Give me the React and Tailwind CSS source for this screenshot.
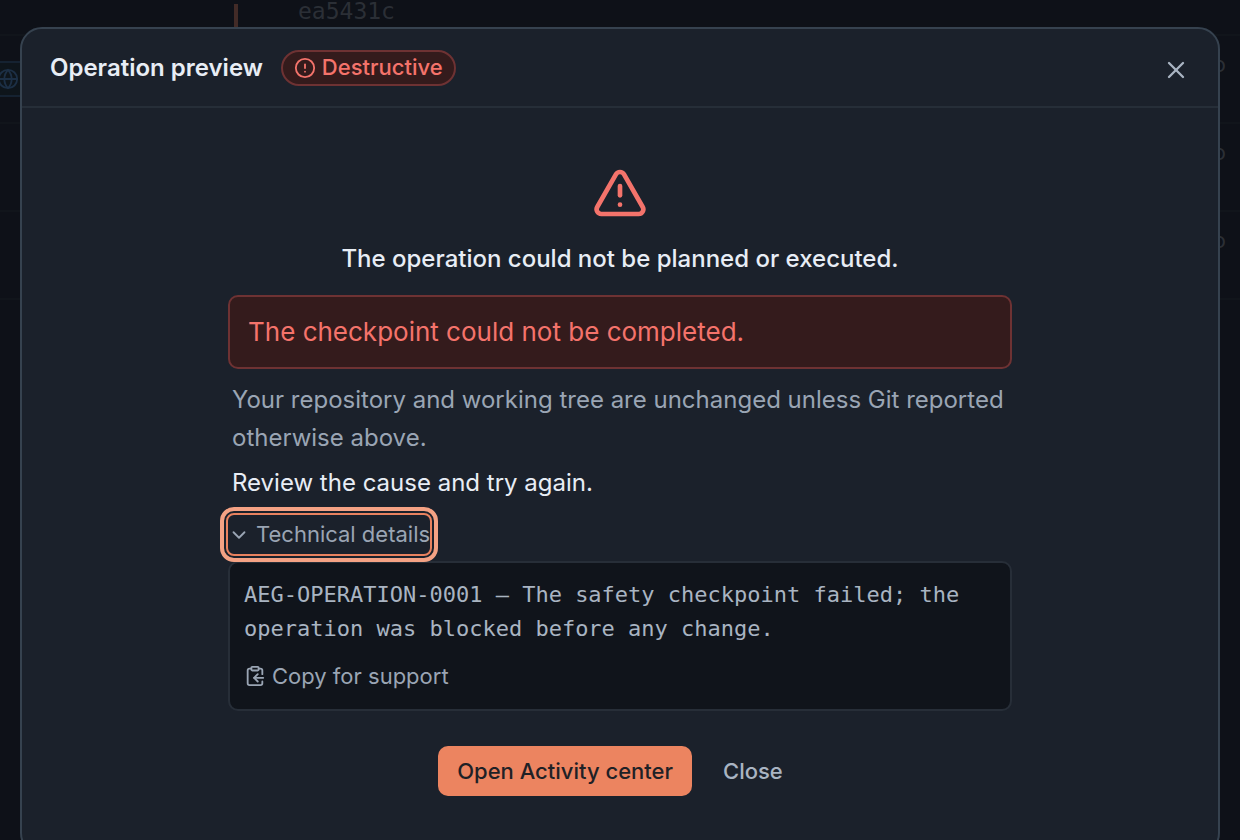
import React, { useState } from 'react';
import { ChevronDown, CircleAlert, ClipboardCopy, Globe, TriangleAlert, X } from 'lucide-react';

const commits = [{ time: '2h ago', remote: true }, { time: '3h ago' }, { time: '3h ago' }];

function CommitRow({ time, remote }) {
  return (
    <li className="flex h-[88px] items-center justify-between border-b-2 border-[#11151b]">
      {remote && (
        <span className="-ml-4 flex h-9 w-16 items-center rounded-lg border-2 border-[#152231] bg-[#0e151b] pl-[11px] text-[#1c2f45]">
          <Globe size={22} strokeWidth={2} />
        </span>
      )}
      <span className="ml-auto self-start pt-3 pr-[14px] text-[22px] text-[#2b2f35]">{time}</span>
    </li>
  );
}

function CommitList() {
  return (
    <ul aria-hidden="true">
      <li className="flex h-9 border-b-2 border-[#11151b] pl-[234px]">
        <span className="mt-1 w-1 bg-[#422b27]" />
        <span className="ml-[60px] font-['DejaVu_Sans_Mono',monospace] text-[23px] leading-none text-[#2b2f36]">
          ea5431c
        </span>
      </li>
      {commits.map((commit, i) => (
        <CommitRow key={i} {...commit} />
      ))}
    </ul>
  );
}

function TechnicalDetails() {
  const [open, setOpen] = useState(true);

  return (
    <div>
      <button
        type="button"
        aria-expanded={open}
        onClick={() => setOpen(!open)}
        className="-ml-[2px] mt-3 mb-[5px] flex h-[43px] items-center gap-[6px] rounded-lg border-2 border-[#e9825f] text-[22px] text-[#9aa5b4] outline-4 outline-offset-2 outline-[#f4a284]"
      >
        <ChevronDown size={22} strokeWidth={2} />
        Technical details
      </button>
      {open && (
        <div className="rounded-[10px] border-2 border-[#272e38] bg-[#10141b] px-[14px] py-[15px]">
          <p className="font-['DejaVu_Sans_Mono',monospace] text-[22px] leading-[34px] text-[#a9b4c2]">
            AEG-OPERATION-0001 — The safety checkpoint failed; the operation was blocked before any change.
          </p>
          <button type="button" className="mt-3 flex h-9 items-center gap-[6px] text-[22px] text-[#9aa5b4]">
            <ClipboardCopy size={22} strokeWidth={2} />
            Copy for support
          </button>
        </div>
      )}
    </div>
  );
}

function OperationDialog() {
  return (
    <section
      role="dialog"
      aria-labelledby="dialog-title"
      className="mx-5 mt-[27px] rounded-[22px] border-2 border-[#36424f] bg-[#1b212b]"
    >
      <header className="flex h-[79px] items-center justify-between border-b-2 border-[#262e38] px-7">
        <div className="flex items-center gap-[18px]">
          <h2 id="dialog-title" className="text-[24px] font-semibold text-[#e8edf5]">
            Operation preview
          </h2>
          <span className="flex h-9 items-center gap-[6px] rounded-full border-2 border-[#6e3233] bg-[#341b1c] px-[11px] text-[22px] font-medium text-[#f4736b]">
            <CircleAlert size={22} strokeWidth={2} />
            Destructive
          </span>
        </div>
        <button type="button" aria-label="Close dialog" className="pt-1 text-[#a9b4c2]">
          <X size={28} />
        </button>
      </header>

      <div className="mx-auto flex max-w-[784px] flex-col py-[57px]">
        <TriangleAlert size={56} className="self-center text-[#f4736b]" />
        <h3 className="mt-5 text-center text-[24px] leading-9 font-medium text-[#e8edf5]">
          The operation could not be planned or executed.
        </h3>
        <p
          role="alert"
          className="mt-[18px] rounded-[10px] border-2 border-[#6e3233] bg-[#341b1c] p-[18px] text-[26px] leading-[34px] text-[#f4736b]"
        >
          The checkpoint could not be completed.
        </p>
        <p className="mt-3 px-1 text-[24px] leading-[38px] text-[#9aa5b4]">
          Your repository and working tree are unchanged unless Git reported otherwise above.
        </p>
        <p className="mt-2 px-1 text-[24px] leading-9 text-[#e8edf5]">Review the cause and try again.</p>
        <TechnicalDetails />
        <div className="mt-[35px] flex justify-center gap-3">
          <button
            type="button"
            className="h-[50px] rounded-[10px] bg-[#ec8460] px-[19px] text-[22px] font-medium text-[#1f2126]"
          >
            Open Activity center
          </button>
          <button type="button" className="h-[50px] rounded-[10px] px-[19px] text-[22px] font-medium text-[#a9b4c2]">
            Close
          </button>
        </div>
      </div>
    </section>
  );
}

export default function App() {
  return (
    <main className="relative h-screen overflow-hidden bg-[#0e1118] font-['Inter',sans-serif]">
      <CommitList />
      <div className="absolute inset-0 overflow-hidden">
        <OperationDialog />
      </div>
    </main>
  );
}
